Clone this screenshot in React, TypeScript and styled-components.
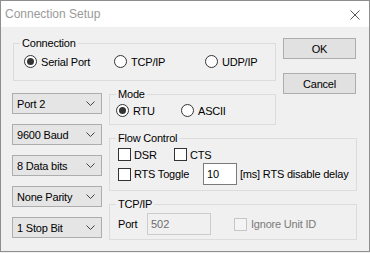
import styled, { createGlobalStyle } from 'styled-components';

const GlobalStyle = createGlobalStyle`
  html, body {
    margin: 0;
    padding: 0;
    background: #f0f0f0;
  }
  * {
    box-sizing: border-box;
  }
`;

// Dialog frame
const Window = styled.div`
  width: 370px;
  height: 252px;
  border: 1px solid #8e8e8e;
  background: #f0f0f0;
  display: flex;
  flex-direction: column;
  font-family: "Liberation Sans", Arial, sans-serif;
  font-size: 11px;
  letter-spacing: -0.2px;
  color: #000;
`;

const TitleBar = styled.div`
  height: 26px;
  flex: none;
  background: #fff;
  display: flex;
  align-items: center;
  justify-content: space-between;
  padding: 0 9px 0 4px;
`;

const Title = styled.span`
  font-size: 12px;
  letter-spacing: 0;
  color: #9a9a9a;
`;

const CloseIcon = styled.svg`
  width: 10px;
  height: 10px;
  margin-top: 2px;
`;

// Main grid of the dialog body
const Body = styled.div`
  display: grid;
  grid-template-columns: 90px 167px 74px;
  grid-template-rows: auto auto auto auto;
  grid-template-areas:
    "conn conn btns"
    "sel mode btns"
    "sel flow flow"
    "sel tcp tcp";
  column-gap: 7px;
  row-gap: 7px;
  padding: 10px 0 0 11px;
`;

const Area = styled.div<{ $area: string; $top?: number; $gap?: number }>`
  grid-area: ${(p) => p.$area};
  display: flex;
  flex-direction: column;
  gap: ${(p) => p.$gap ?? 0}px;
  padding-top: ${(p) => p.$top ?? 0}px;
`;

// Group box
const Group = styled.fieldset<{ $area: string; $shift?: number }>`
  grid-area: ${(p) => p.$area};
  margin: 0 0 0 ${(p) => p.$shift ?? 0}px;
  padding: 0;
  min-width: 0;
  border: 1px solid #dcdcdc;
`;

const GroupLabel = styled.legend`
  margin-left: 6px;
  padding: 0 2px;
  font-size: 11px;
  line-height: 13px;
`;

const GroupBody = styled.div<{ $pad: string; $gap?: number }>`
  padding: ${(p) => p.$pad};
  display: flex;
  flex-direction: column;
  gap: ${(p) => p.$gap ?? 0}px;
`;

const Row = styled.div`
  display: flex;
  align-items: center;
`;

const Option = styled.label<{ $w?: number; $gap?: number; $ml?: number; $off?: boolean }>`
  display: inline-flex;
  align-items: center;
  gap: ${(p) => p.$gap ?? 4}px;
  height: 15px;
  width: ${(p) => (p.$w ? `${p.$w}px` : 'auto')};
  margin-left: ${(p) => p.$ml ?? 0}px;
  flex: none;
  color: ${(p) => (p.$off ? '#7a7a7a' : '#000')};
  white-space: nowrap;
`;

const Radio = styled.span<{ $on?: boolean }>`
  width: 13px;
  height: 13px;
  border-radius: 50%;
  border: 1px solid #333;
  background: #fff;
  display: inline-flex;
  align-items: center;
  justify-content: center;
  flex: none;

  &::after {
    content: '';
    width: 7px;
    height: 7px;
    border-radius: 50%;
    background: ${(p) => (p.$on ? '#333' : 'transparent')};
  }
`;

const Check = styled.span<{ $off?: boolean }>`
  width: 13px;
  height: 13px;
  border: 1px solid ${(p) => (p.$off ? '#c6c6c6' : '#333')};
  background: ${(p) => (p.$off ? '#f4f4f4' : '#fff')};
  flex: none;
`;

// Combo boxes on the left
const Combo = styled.div`
  height: 21px;
  border: 1px solid #adadad;
  background: #e5e5e5;
  display: flex;
  align-items: center;
  justify-content: space-between;
  padding: 0 6px 0 4px;
`;

const Chevron = () => (
  <svg width="9" height="5" viewBox="0 0 9 5">
    <path d="M0.5 0.5 L4.5 4.5 L8.5 0.5" fill="none" stroke="#444" strokeWidth="1" />
  </svg>
);

const Button = styled.button`
  height: 21px;
  width: 73px;
  border: 1px solid #adadad;
  background: #e1e1e1;
  font-family: "Liberation Sans", Arial, sans-serif;
  font-size: 11px;
  letter-spacing: -0.2px;
  color: #000;
  padding: 0;
`;

const TextBox = styled.input<{ $w: number; $off?: boolean }>`
  width: ${(p) => p.$w}px;
  height: 22px;
  flex: none;
  border: 1px solid ${(p) => (p.$off ? '#cccccc' : '#7a7a7a')};
  background: ${(p) => (p.$off ? '#f0f0f0' : '#fff')};
  color: ${(p) => (p.$off ? '#6d6d6d' : '#000')};
  font-family: "Liberation Sans", Arial, sans-serif;
  font-size: 11px;
  padding: 0 3px;
  outline: none;
`;

const Text = styled.span<{ $w?: number; $ml?: number }>`
  width: ${(p) => (p.$w ? `${p.$w}px` : 'auto')};
  margin-left: ${(p) => p.$ml ?? 0}px;
  flex: none;
  white-space: nowrap;
`;

const combos = ['Port 2', '9600 Baud', '8 Data bits', 'None Parity', '1 Stop Bit'];

export default function App() {
  return (
    <>
      <GlobalStyle />
      <Window>
        <TitleBar>
          <Title>Connection Setup</Title>
          <CloseIcon viewBox="0 0 10 10">
            <path d="M0.5 0.5 L9.5 9.5 M9.5 0.5 L0.5 9.5" stroke="#555" strokeWidth="1" />
          </CloseIcon>
        </TitleBar>
        <Body>
          <Group $area="conn" $shift={1}>
            <GroupLabel>Connection</GroupLabel>
            <GroupBody $pad="4px 0 11px 10px">
              <Row>
                <Option $w={90}>
                  <Radio $on />
                  Serial Port
                </Option>
                <Option $w={91}>
                  <Radio />
                  TCP/IP
                </Option>
                <Option>
                  <Radio />
                  UDP/IP
                </Option>
              </Row>
            </GroupBody>
          </Group>

          <Area $area="btns" $top={1} $gap={14}>
            <Button>OK</Button>
            <Button>Cancel</Button>
          </Area>

          <Area $area="sel" $top={5} $gap={10}>
            {combos.map((c) => (
              <Combo key={c}>
                <span>{c}</span>
                <Chevron />
              </Combo>
            ))}
          </Area>

          <Group $area="mode">
            <GroupLabel>Mode</GroupLabel>
            <GroupBody $pad="2px 0 6px 6px">
              <Row>
                <Option $w={65}>
                  <Radio $on />
                  RTU
                </Option>
                <Option>
                  <Radio />
                  ASCII
                </Option>
              </Row>
            </GroupBody>
          </Group>

          <Group $area="flow">
            <GroupLabel>Flow Control</GroupLabel>
            <GroupBody $pad="2px 0 5px 8px" $gap={1}>
              <Row>
                <Option $w={56} $gap={3}>
                  <Check />
                  DSR
                </Option>
                <Option $gap={3}>
                  <Check />
                  CTS
                </Option>
              </Row>
              <Row>
                <Option $w={85} $gap={3}>
                  <Check />
                  RTS Toggle
                </Option>
                <TextBox $w={34} defaultValue="10" />
                <Text $ml={3}>[ms] RTS disable delay</Text>
              </Row>
            </GroupBody>
          </Group>

          <Group $area="tcp">
            <GroupLabel>TCP/IP</GroupLabel>
            <GroupBody $pad="2px 0 4px 8px">
              <Row>
                <Text $w={29}>Port</Text>
                <TextBox $w={64} $off defaultValue="502" disabled />
                <Option $off $gap={4} $ml={23}>
                  <Check $off />
                  Ignore Unit ID
                </Option>
              </Row>
            </GroupBody>
          </Group>
        </Body>
      </Window>
    </>
  );
}
